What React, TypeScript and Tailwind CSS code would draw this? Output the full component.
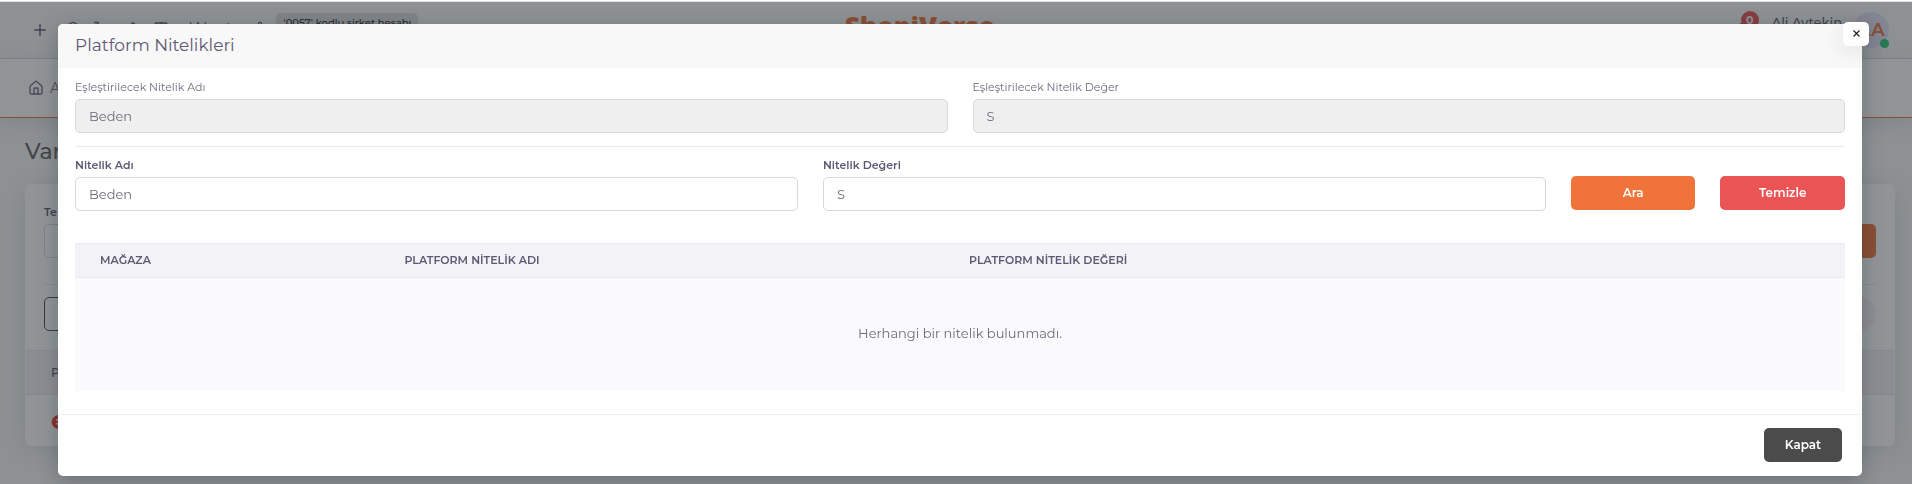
import React from "react";
import { Bell, Box, Home, Plus, Settings, Table, TriangleAlert } from "lucide-react";

const fieldBase =
  "h-[34px] w-full rounded-[5px] border border-[#d8d6de] px-[13px] text-[13px] text-[#6e6b7b] outline-none";

function Field({ id, label, value, readOnly = false }: { id: string; label: string; value: string; readOnly?: boolean }) {
  return (
    <div>
      <label
        htmlFor={id}
        className={
          readOnly
            ? "mb-1 block text-[11px] leading-4 text-[#6e6b7b]"
            : "mb-1 block text-[11px] font-semibold leading-4 text-[#5e5873]"
        }
      >
        {label}
      </label>
      <input
        id={id}
        type="text"
        defaultValue={value}
        readOnly={readOnly}
        className={readOnly ? `${fieldBase} bg-[#efefef]` : `${fieldBase} bg-white`}
      />
    </div>
  );
}

function TopBar() {
  return (
    <header className="flex h-[57px] items-start border-b border-[#dcdde2] pl-[31px] pr-[23px] text-[#5e5873]">
      <nav className="flex w-[43.8%] shrink-0 items-start pt-[11px]">
        <button aria-label="Ekle" className="mt-2 mr-4"><Plus size={18} /></button>
        <button aria-label="Ürünler" className="mt-2 mr-2"><Box size={16} /></button>
        <button aria-label="Entegrasyon" className="mt-2 mr-5">
          <svg width="16" height="16" viewBox="0 0 16 16" fill="none" stroke="currentColor" strokeWidth="1.6">
            <path d="M5 1.5h4v6H6v7" />
          </svg>
        </button>
        <button aria-label="Uyarılar" className="mt-2 mr-3"><TriangleAlert size={16} /></button>
        <button aria-label="Liste" className="mt-2 mr-5"><Table size={16} /></button>
        <span className="mt-[6px] mr-5 text-base leading-5">Woot</span>
        <button aria-label="Ayarlar" className="mt-2 mr-2"><Settings size={16} /></button>
        <span className="rounded-[5px] bg-[#dedede] px-[7px] py-[2px] text-[10px] font-medium leading-4 text-[#212529]">
          '0057' kodlu şirket hesabı
        </span>
      </nav>
      <a href="#" className="pt-[6px] font-['Open_Sans',sans-serif] text-[26px] font-extrabold leading-9 text-[#f0743a]">
        ShopiVerse
      </a>
      <div className="flex flex-1 items-start justify-end gap-[11px] pt-[10px]">
        <button aria-label="Bildirimler" className="relative mt-[10px] mr-2">
          <Bell size={20} />
          <span className="absolute -top-[11px] left-[8px] flex size-[18px] items-center justify-center rounded-full bg-[#ea5455] text-[11px] font-bold text-white">
            0
          </span>
        </button>
        <span className="text-[13px] font-medium leading-5">Ali Aytekin</span>
        <span className="relative flex size-[36px] items-center justify-center rounded-full bg-[#e3e1f5] text-lg font-semibold text-[#f0743a]">
          AA
          <span className="absolute bottom-0 right-0 size-[9px] rounded-full bg-[#28c76f]" />
        </span>
      </div>
    </header>
  );
}

function Page() {
  return (
    <div className="min-h-screen bg-[#f8f8f8]">
      <div className="h-[2px] border-b border-[#dee1e6] bg-white" />
      <TopBar />
      <div className="flex h-[59px] items-center gap-[6px] border-b border-[#f0743a] bg-white pl-[28px] text-sm text-[#6e6b7b] shadow-[0_4px_24px_0_rgba(34,41,47,0.12)]">
        <Home size={16} />
        <span>A</span>
      </div>
      <main className="px-[25px] pt-[19px]">
        <h1 className="mb-[17px] text-[22px] font-medium leading-[30px] text-[#636363]">Var</h1>
        <section className="mr-[-8px] rounded-[6px] bg-white shadow-[0_4px_24px_0_rgba(34,41,47,0.12)]">
          <div className="flex h-[166px] flex-col px-[19px] pt-[20px]">
            <label htmlFor="supplier" className="text-[11px] font-semibold leading-4 text-[#5e5873]">Te</label>
            <div className="mt-1 flex justify-between border-b border-[#ebe9f1] pb-[26px]">
              <input id="supplier" className="h-[34px] w-[200px] rounded-[5px] border border-[#d8d6de]" />
              <button aria-label="Listele" className="h-[34px] w-[120px] rounded-[5px] bg-[#f0743a]" />
            </div>
            <div className="mt-3 flex justify-between">
              <button aria-label="Seç" className="h-[34px] w-[80px] rounded-[5px] border border-[#4b4b4b]" />
              <span className="size-[34px] rounded-full bg-[#f3f2f7]" />
            </div>
          </div>
          <div className="mx-px flex h-[45px] items-center border-y border-[#ebe9f1] bg-[#f3f2f7] px-[25px] text-xs font-medium text-[#5e5873]">
            P
          </div>
          <div className="mx-px flex h-[51px] items-center px-[25px] text-[26px] font-bold text-[#ea3a2c]">e</div>
        </section>
      </main>
    </div>
  );
}

function AttributeDialog() {
  return (
    <div
      role="dialog"
      aria-labelledby="dialog-title"
      className="ml-[58px] mr-[50px] mt-[22px] rounded-[5px] bg-white shadow-[0_5px_20px_0_rgba(34,41,47,0.3)]"
    >
      <div className="relative flex h-[44px] items-center rounded-t-[5px] bg-[#f8f8f8] px-[17px] pb-[2px]">
        <h2 id="dialog-title" className="text-[17px] leading-6 text-[#5e5873]">Platform Nitelikleri</h2>
        <button
          aria-label="Kapat"
          className="absolute -right-[7px] -top-[2px] flex h-[24px] w-[26px] items-center justify-center rounded-[5px] bg-white pb-[2px] text-[#222222] shadow-[0_5px_20px_0_rgba(34,41,47,0.1)]"
        >
          <svg width="7" height="7" viewBox="0 0 7 7" stroke="currentColor" strokeWidth="1.2" fill="none">
            <path d="M0.5 0.5 6.5 6.5M6.5 0.5 0.5 6.5" />
          </svg>
        </button>
      </div>

      <div className="px-[17px] pb-[23px] pt-[11px]">
        <div className="grid grid-cols-2 gap-[25px] border-b border-[#ebe9f1] pb-[13px]">
          <Field id="match-name" label="Eşleştirilecek Nitelik Adı" value="Beden" readOnly />
          <Field id="match-value" label="Eşleştirilecek Nitelik Değer" value="S" readOnly />
        </div>

        <form className="mt-[10px] grid grid-cols-12 items-end gap-x-[25px]" onSubmit={(e) => e.preventDefault()}>
          <div className="col-span-5">
            <Field id="attr-name" label="Nitelik Adı" value="Beden" />
          </div>
          <div className="col-span-5">
            <Field id="attr-value" label="Nitelik Değeri" value="S" />
          </div>
          <button type="submit" className="mb-px h-[34px] rounded-[5px] bg-[#f0743a] text-xs font-semibold text-white">
            Ara
          </button>
          <button type="reset" className="mb-px h-[34px] rounded-[5px] bg-[#ea5455] text-xs font-semibold text-white">
            Temizle
          </button>
        </form>

        <table className="mt-8 w-full table-fixed border-separate border-spacing-0">
          <thead>
            <tr className="h-[35px] bg-[#f3f2f7] text-left text-[11px] text-[#5e5873]">
              <th className="w-[17.2%] border-y border-[#ebe9f1] px-[25px] font-semibold">MAĞAZA</th>
              <th className="w-[31.9%] border-y border-[#ebe9f1] px-[25px] font-semibold">PLATFORM NİTELİK ADI</th>
              <th className="border-y border-[#ebe9f1] px-[25px] font-semibold">PLATFORM NİTELİK DEĞERİ</th>
            </tr>
          </thead>
          <tbody>
            <tr className="h-[113px] bg-[#fafafc]">
              <td colSpan={3} className="pb-[2px] text-center text-[13px] text-[#6e6b7b]">
                Herhangi bir nitelik bulunmadı.
              </td>
            </tr>
          </tbody>
        </table>
      </div>

      <div className="flex justify-end border-t border-[#f0f0f1] px-[20px] pb-[14px] pt-[13px]">
        <button className="h-[34px] w-[78px] rounded-[5px] bg-[#4b4b4b] text-xs font-semibold text-white">Kapat</button>
      </div>
    </div>
  );
}

export default function App() {
  return (
    <div className="h-screen overflow-hidden font-['Montserrat','Inter',sans-serif]">
      <Page />
      <div className="fixed inset-x-0 bottom-0 top-[2px] overflow-hidden bg-[#22292f]/50">
        <AttributeDialog />
      </div>
    </div>
  );
}
